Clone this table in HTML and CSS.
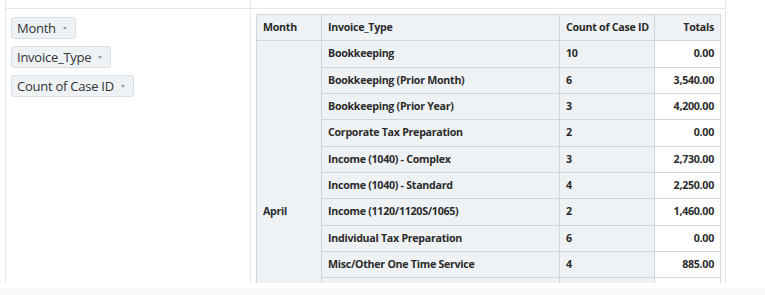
FILE: index.html
```html
<!DOCTYPE html>
<html>
<head>
<meta charset="utf-8">
<link rel="stylesheet" href="styles.css">
</head>
<body>
<div class="ui">
  <div class="cell top"></div>
  <div class="cell top"></div>
  <div class="cell axis">
    <ul class="attrs">
      <li><span class="attr">Month<span class="caret"></span></span></li>
      <li><span class="attr">Invoice_Type<span class="caret"></span></span></li>
      <li><span class="attr">Count of Case ID<span class="caret"></span></span></li>
    </ul>
  </div>
  <div class="cell output">
    <table class="pvt">
      <colgroup><col class="c1"><col class="c2"><col class="c3"><col class="c4"></colgroup>
      <thead>
        <tr><th>Month</th><th>Invoice_Type</th><th>Count of Case ID</th><th class="num">Totals</th></tr>
      </thead>
      <tbody>
        <tr><th rowspan="13" class="month">April</th><th>Bookkeeping</th><th>10</th><td>0.00</td></tr>
        <tr><th>Bookkeeping (Prior Month)</th><th>6</th><td>3,540.00</td></tr>
        <tr><th>Bookkeeping (Prior Year)</th><th>3</th><td>4,200.00</td></tr>
        <tr><th>Corporate Tax Preparation</th><th>2</th><td>0.00</td></tr>
        <tr><th>Income (1040) - Complex</th><th>3</th><td>2,730.00</td></tr>
        <tr><th>Income (1040) - Standard</th><th>4</th><td>2,250.00</td></tr>
        <tr><th>Income (1120/1120S/1065)</th><th>2</th><td>1,460.00</td></tr>
        <tr><th>Individual Tax Preparation</th><th>6</th><td>0.00</td></tr>
        <tr><th>Misc/Other One Time Service</th><th>4</th><td>885.00</td></tr>
        <tr class="rest"><th></th><th></th><td></td></tr>
        <tr class="rest"><th></th><th></th><td></td></tr>
        <tr class="rest"><th></th><th></th><td></td></tr>
        <tr class="rest"><th></th><th></th><td></td></tr>
      </tbody>
    </table>
  </div>
</div>
<div class="band"></div>
</body>
</html>
```
FILE: styles.css
```css
html, body {
  margin: 0;
  padding: 0;
  background: #fff;
}
body {
  font-family: "Open Sans", "Noto Sans", sans-serif;
  color: #2b2b2b;
}
.ui {
  display: grid;
  grid-template-columns: 245px 475px;
  grid-template-rows: 8px 275px;
  margin-left: 5px;
  width: max-content;
  border-left: 1px solid #e6e6e6;
  overflow: hidden;
}
.cell {
  border-right: 1px solid #e6e6e6;
  min-height: 0;
  overflow: hidden;
}
.axis, .output {
  border-top: 1px solid #e6e6e6;
}
.attrs {
  list-style: none;
  margin: 0;
  padding: 7px 0 0 5px;
  display: flex;
  flex-direction: column;
  align-items: flex-start;
  gap: 6px;
}
.attrs li {
  display: block;
}
.attr {
  display: inline-flex;
  align-items: center;
  height: 22px;
  box-sizing: border-box;
  padding: 0 8px 0 5px;
  background: #eef2f5;
  border: 1px solid #d7dee4;
  border-radius: 3px;
  font-size: 13px;
  letter-spacing: -0.25px;
  color: #333;
  white-space: nowrap;
}
.caret {
  display: inline-block;
  margin-left: 7px;
  width: 0;
  height: 0;
  border-left: 2.5px solid transparent;
  border-right: 2.5px solid transparent;
  border-top: 3px solid #9a9a9a;
}
.output {
  padding: 5px 0 0 5px;
}
.pvt {
  border-collapse: collapse;
  table-layout: fixed;
  width: 464px;
  font-size: 10.67px;
  font-weight: 700;
  letter-spacing: -0.28px;
  line-height: 15.33px;
}
.c1 { width: 65px; }
.c2 { width: 238px; }
.c3 { width: 95px; }
.c4 { width: 66px; }
.pvt th, .pvt td {
  border: 1px solid #cfd7dd;
  padding: 5px 6px;
  text-align: left;
  white-space: nowrap;
  overflow: hidden;
}
.pvt .rest th, .pvt .rest td {
  height: 15.33px;
}
.pvt th {
  background: #eef2f5;
  font-weight: 700;
}
.pvt td {
  background: #fff;
  text-align: right;
}
.pvt th.num {
  text-align: right;
}
.pvt th.month {
  vertical-align: middle;
}
.band {
  margin-top: 5px;
  height: 20px;
  background: #f8f8f8;
}
```
